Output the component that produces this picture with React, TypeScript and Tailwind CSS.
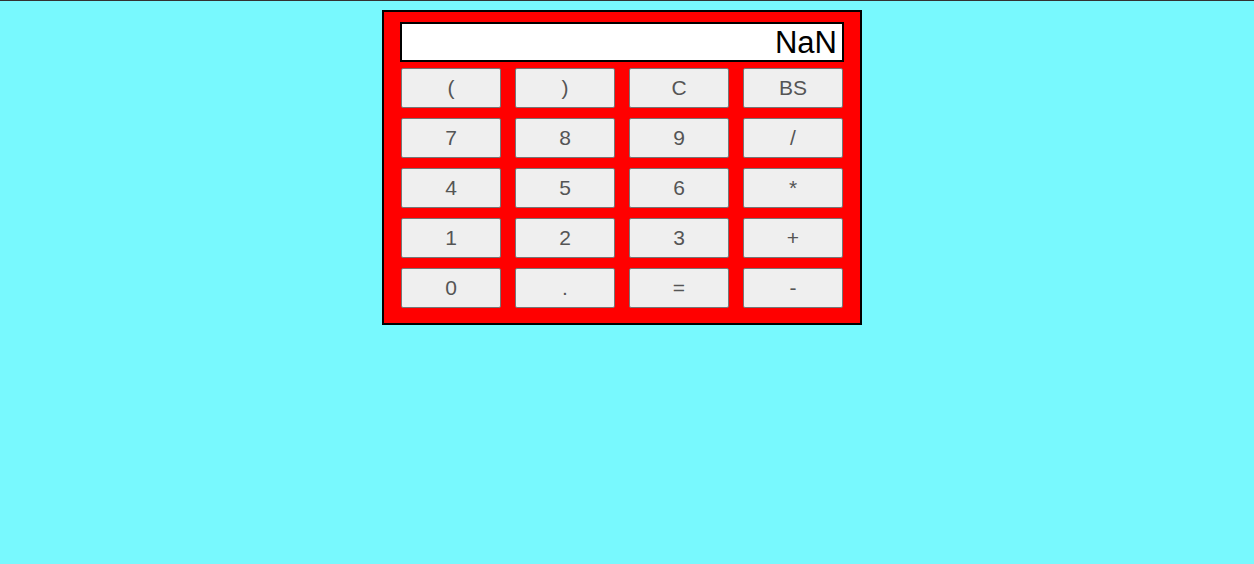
import React from "react";

const rows = [
  ["(", ")", "C", "BS"],
  ["7", "8", "9", "/"],
  ["4", "5", "6", "*"],
  ["1", "2", "3", "+"],
  ["0", ".", "=", "-"],
];

export default function App() {
  return (
    <div
      className="w-full h-[564px] bg-[#78f9fe] border-t border-[#333333] flex justify-center pr-[10px]"
      style={{ fontFamily: '"Liberation Sans", Arial, sans-serif' }}
    >
      <div className="mt-[9px] w-[480px] h-[315px] bg-[#ff0000] border-2 border-black pl-[16px] pt-[10px] flex flex-col">
        <div className="w-[444px] h-[40px] bg-white border-2 border-black flex items-center justify-end pr-[5px] text-[31px] leading-none text-black">
          NaN
        </div>
        <div className="flex flex-col gap-[10px] mt-[6px] ml-[1px]">
          {rows.map((r, i) => (
            <div key={i} className="flex gap-[14px]">
              {r.map((k) => (
                <button
                  key={k}
                  className="w-[100px] h-[40px] bg-[#efefef] border border-[#767676] rounded-[2px] text-[21px] text-[#555555] flex items-center justify-center leading-none pb-[2px]"
                >
                  {k}
                </button>
              ))}
            </div>
          ))}
        </div>
      </div>
    </div>
  );
}
